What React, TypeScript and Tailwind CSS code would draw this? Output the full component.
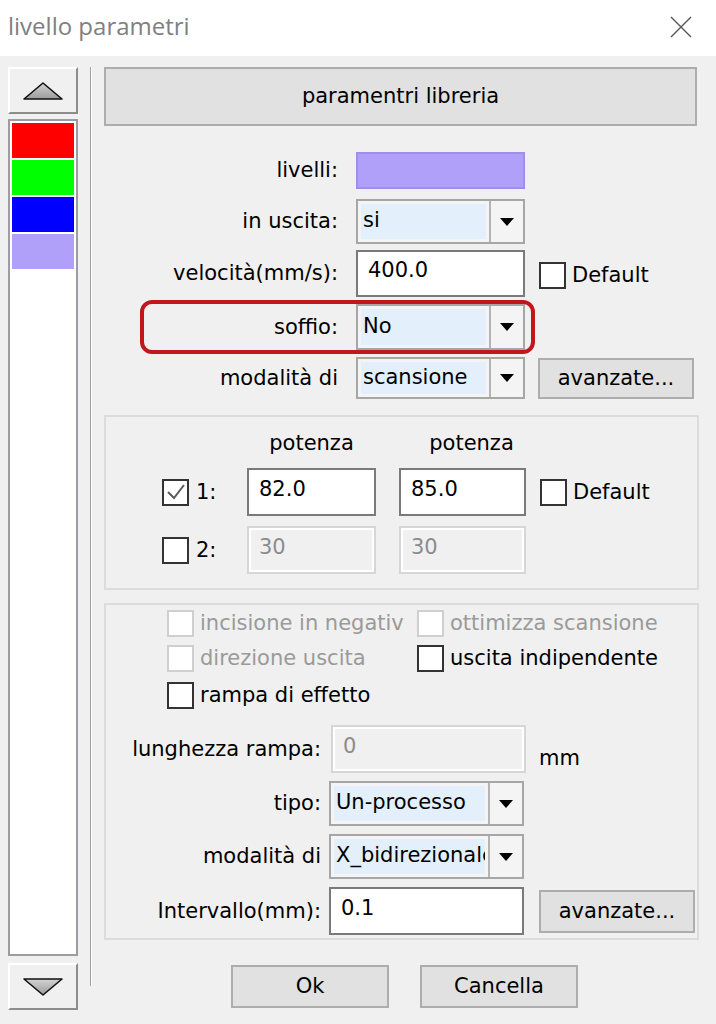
import type { ReactNode } from 'react';

const swatches = ['#ff0000', '#00ff00', '#0000ff', '#b1a0f9'];

function Arrow({ up }: { up?: boolean }) {
  return (
    <svg width="44" height="20" viewBox="0 0 44 20">
      <defs>
        <linearGradient id={up ? 'gu' : 'gd'} x1="0" y1="0" x2="0" y2="1">
          <stop offset="0" stopColor="#d4d4d4" />
          <stop offset="1" stopColor="#9a9a9a" />
        </linearGradient>
      </defs>
      <polygon
        points={up ? '22,2 41,18 3,18' : '3,2 41,2 22,18'}
        fill={`url(#${up ? 'gu' : 'gd'})`}
        stroke="#111"
        strokeWidth="1.6"
        strokeLinejoin="round"
      />
    </svg>
  );
}

function SideButton({ up }: { up?: boolean }) {
  return (
    <div className="flex h-[47px] items-center justify-center border-2 border-t-white border-l-white border-r-[#8c8c8c] border-b-[#8c8c8c] bg-[#f0f0f0]">
      <Arrow up={up} />
    </div>
  );
}

function Button({ children, className = '' }: { children: ReactNode; className?: string }) {
  return (
    <div
      className={`flex items-center justify-center border-2 border-[#adadad] bg-[#e1e1e1] text-black ${className}`}
    >
      {children}
    </div>
  );
}

function Combo({ value, className = '' }: { value: string; className?: string }) {
  return (
    <div className={`flex border-2 border-[#a6a6a6] bg-[#f4f4f4] ${className}`}>
      <div className="m-[3px] flex flex-1 items-center overflow-hidden whitespace-nowrap bg-[#e3f0fb] pl-[2px] pb-[2px]">
        {value}
      </div>
      <div className="flex w-[34px] items-center justify-center border-l-2 border-[#b4b4b4]">
        <svg width="14" height="8" viewBox="0 0 14 8">
          <polygon points="0,0 14,0 7,8" fill="#000" />
        </svg>
      </div>
    </div>
  );
}

function Input({
  value,
  disabled,
  className = '',
}: {
  value: string;
  disabled?: boolean;
  className?: string;
}) {
  return (
    <div
      className={`flex items-center pb-[6px] pl-[10px] ${
        disabled
          ? 'border-2 border-[#d6d6d6] bg-[#f0f0f0] text-[#8c8c8c] shadow-[inset_0_0_0_2px_#ffffff]'
          : 'border-2 border-[#7a7a7a] bg-white text-black'
      } ${className}`}
    >
      {value}
    </div>
  );
}

function Check({ checked, disabled }: { checked?: boolean; disabled?: boolean }) {
  return (
    <div
      className={`flex h-[27px] w-[27px] shrink-0 items-center justify-center border-2 bg-white ${
        disabled ? 'border-[#cfcfcf]' : 'border-[#333333]'
      }`}
    >
      {checked && (
        <svg width="20" height="18" viewBox="0 0 20 18">
          <polyline points="2,9 8,15 18,2" fill="none" stroke="#5a5a5a" strokeWidth="2" />
        </svg>
      )}
    </div>
  );
}

function TopRow({
  label,
  children,
  className = '',
}: {
  label: string;
  children: ReactNode;
  className?: string;
}) {
  return (
    <div className={`flex items-center ${className}`}>
      <div className="w-[234px] whitespace-nowrap text-right">{label}</div>
      {children}
    </div>
  );
}

function LowRow({
  label,
  children,
  className = '',
}: {
  label: string;
  children: ReactNode;
  className?: string;
}) {
  return (
    <div className={`flex items-center ${className}`}>
      <div className="w-[215px] whitespace-nowrap text-right">{label}</div>
      {children}
    </div>
  );
}

export default function App() {
  return (
    <div className="flex h-[1024px] w-[716px] flex-col overflow-hidden bg-[#f0f0f0] font-['DejaVu_Sans',sans-serif] text-[21px] leading-none text-black">
      <div className="flex h-[56px] shrink-0 items-center justify-between bg-white pl-[8px] pr-[24px]">
        <span className="pb-[4px] font-['Open_Sans',sans-serif] text-[24px] text-[#808080]">
          livello parametri
        </span>
        <svg width="22" height="22" viewBox="0 0 22 22" className="mb-[2px]">
          <path d="M1 1 L21 21 M21 1 L1 21" stroke="#555" strokeWidth="1.4" />
        </svg>
      </div>

      <div className="flex flex-1 pt-[11px]">
        <div className="ml-[8px] flex w-[70px] flex-col pb-[14px]">
          <SideButton up />
          <div className="mt-[5px] flex flex-1 flex-col gap-[2px] border-2 border-[#9c9ca2] bg-white p-[2px]">
            {swatches.map((c) => (
              <div key={c} className="h-[35px]" style={{ backgroundColor: c }} />
            ))}
          </div>
          <div className="mt-[7px]">
            <SideButton />
          </div>
        </div>

        <div className="ml-[12px] mb-[38px] w-[2px] border-l border-[#a0a0a0] bg-white" />

        <div className="ml-[12px] flex w-[595px] flex-col">
          <Button className="h-[59px] w-[593px]">paramentri libreria</Button>

          <TopRow label="livelli:" className="mt-[26px] h-[37px]">
            <div className="ml-[18px] h-[37px] w-[169px] border-2 border-[#9f8fe6] bg-[#b1a0f9]" />
          </TopRow>

          <TopRow label="in uscita:" className="mt-[10px] h-[45px]">
            <Combo value="si" className="ml-[18px] h-[45px] w-[169px]" />
          </TopRow>

          <TopRow label="velocità(mm/s):" className="mt-[6px] h-[47px]">
            <Input value="400.0" className="ml-[18px] h-[47px] w-[169px]" />
            <div className="ml-[14px] mt-[4px] flex items-center gap-[6px]">
              <Check />
              <span>Default</span>
            </div>
          </TopRow>

          <TopRow label="soffio:" className="relative mt-[7px] h-[46px]">
            <Combo value="No" className="ml-[18px] h-[46px] w-[169px]" />
            <div className="absolute left-[36px] top-[-4px] h-[54px] w-[395px] rounded-[12px] border-[4px] border-[#c0171d]" />
          </TopRow>

          <TopRow label="modalità di" className="mt-[7px] h-[42px]">
            <Combo value="scansione" className="ml-[18px] h-[42px] w-[169px]" />
            <Button className="ml-[13px] h-[41px] w-[156px]">avanzate...</Button>
          </TopRow>

          <div className="mt-[16px] flex h-[175px] w-[595px] flex-col border-2 border-[#dcdcdc]">
            <div className="mt-[13px] flex h-[26px] items-center">
              <div className="ml-[141px] w-[129px] text-center">potenza</div>
              <div className="ml-[32px] w-[127px] text-center">potenza</div>
            </div>
            <div className="mt-[12px] flex h-[48px] items-center">
              <div className="ml-[56px]">
                <Check checked />
              </div>
              <div className="ml-[7px] w-[51px]">1:</div>
              <Input value="82.0" className="h-[48px] w-[129px]" />
              <Input value="85.0" className="ml-[23px] h-[48px] w-[127px]" />
              <div className="ml-[14px] flex items-center gap-[6px]">
                <Check />
                <span>Default</span>
              </div>
            </div>
            <div className="mt-[10px] flex h-[48px] items-center">
              <div className="ml-[56px]">
                <Check />
              </div>
              <div className="ml-[7px] w-[51px]">2:</div>
              <Input value="30" disabled className="h-[48px] w-[129px]" />
              <Input value="30" disabled className="ml-[23px] h-[48px] w-[127px]" />
            </div>
          </div>

          <div className="mt-[13px] flex h-[337px] w-[595px] flex-col border-2 border-[#dcdcdc]">
            <div className="mt-[5px] flex h-[26px] items-center pl-[61px]">
              <div className="flex w-[250px] items-center gap-[6px] text-[#9a9a9a]">
                <Check disabled />
                <span className="w-[204px] overflow-hidden whitespace-nowrap">incisione in negativo</span>
              </div>
              <div className="flex items-center gap-[6px] text-[#9a9a9a]">
                <Check disabled />
                <span className="whitespace-nowrap">ottimizza scansione</span>
              </div>
            </div>
            <div className="mt-[9px] flex h-[26px] items-center pl-[61px]">
              <div className="flex w-[250px] items-center gap-[6px] text-[#9a9a9a]">
                <Check disabled />
                <span className="whitespace-nowrap">direzione uscita</span>
              </div>
              <div className="flex items-center gap-[6px]">
                <Check />
                <span className="whitespace-nowrap">uscita indipendente</span>
              </div>
            </div>
            <div className="mt-[11px] flex h-[26px] items-center gap-[6px] pl-[61px]">
              <Check />
              <span>rampa di effetto</span>
            </div>

            <LowRow label="lunghezza rampa:" className="mt-[17px] h-[48px]">
              <Input value="0" disabled className="ml-[10px] h-[48px] w-[195px]" />
              <span className="ml-[13px] mt-[18px]">mm</span>
            </LowRow>

            <LowRow label="tipo:" className="mt-[8px] h-[45px]">
              <Combo value="Un-processo" className="ml-[8px] h-[45px] w-[195px]" />
            </LowRow>

            <LowRow label="modalità di" className="mt-[8px] h-[45px]">
              <Combo value="X_bidirezionale" className="ml-[8px] h-[45px] w-[195px]" />
            </LowRow>

            <LowRow label="Intervallo(mm):" className="mt-[8px] h-[48px]">
              <Input value="0.1" className="ml-[8px] h-[48px] w-[195px]" />
              <Button className="ml-[15px] h-[43px] w-[156px]">avanzate...</Button>
            </LowRow>
          </div>

          <div className="mt-[25px] flex h-[43px]">
            <Button className="ml-[127px] h-[43px] w-[158px]">Ok</Button>
            <Button className="ml-[31px] h-[43px] w-[158px]">Cancella</Button>
          </div>
        </div>
      </div>
    </div>
  );
}
